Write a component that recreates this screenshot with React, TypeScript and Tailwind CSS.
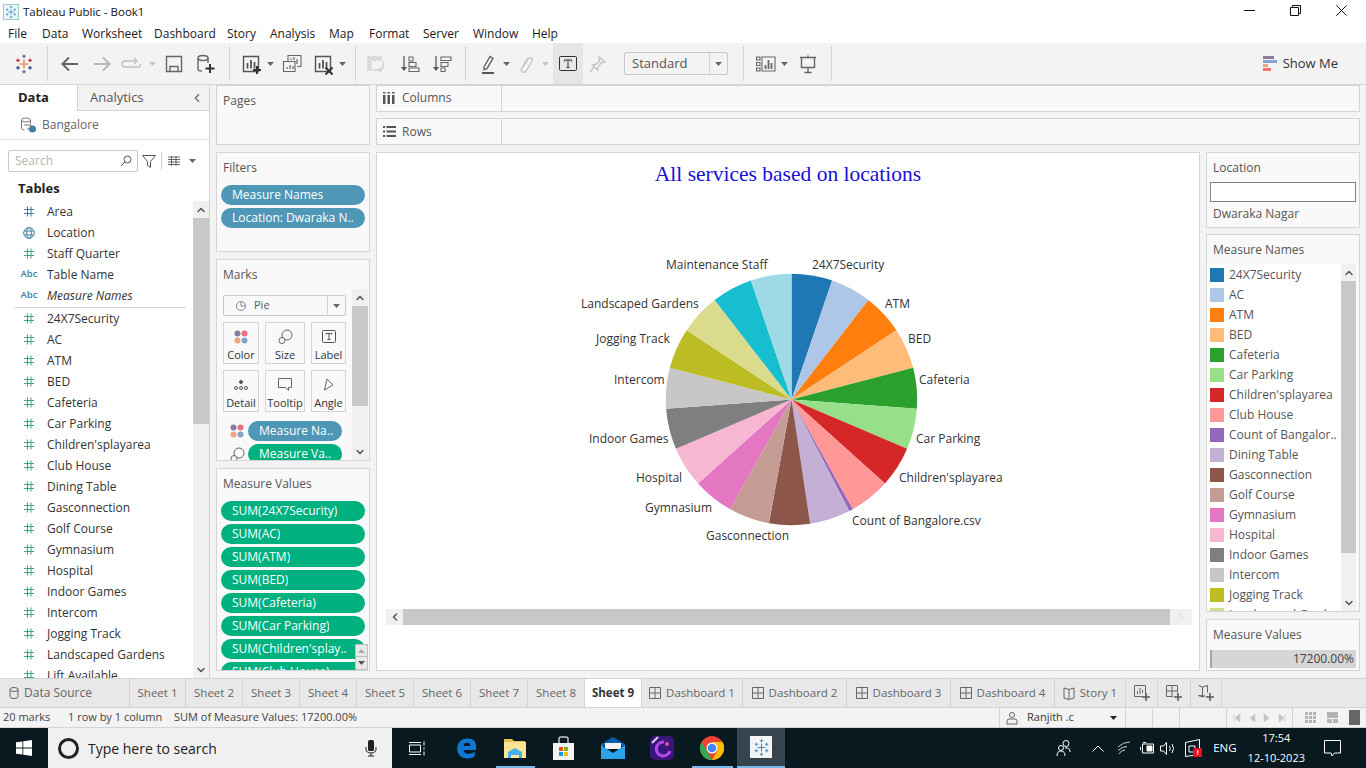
import type { ReactNode } from "react";
import { ChevronDown, ChevronLeft, ChevronRight, ChevronUp } from "lucide-react";

const FONT = "font-['Open_Sans','Noto_Sans',sans-serif]";

const COLORS = [
  "#1f77b4", "#aec7e8", "#ff7f0e", "#ffbb78", "#2ca02c", "#98df8a", "#d62728", "#ff9896", "#9467bd", "#c5b0d5",
  "#8c564b", "#c49c94", "#e377c2", "#f7b6d2", "#7f7f7f", "#c7c7c7", "#bcbd22", "#dbdb8d", "#17becf", "#9edae5",
];

const FIELDS_TOP = [
  { name: "Area", kind: "hash", color: "#3f7f9f" },
  { name: "Location", kind: "globe", color: "#3f7f9f" },
  { name: "Staff Quarter", kind: "hash", color: "#3fa682" },
  { name: "Table Name", kind: "abc", color: "#3f7f9f" },
  { name: "Measure Names", kind: "abc", color: "#3f7f9f", italic: true },
];

const MEASURES = [
  "24X7Security", "AC", "ATM", "BED", "Cafeteria", "Car Parking", "Children'splayarea", "Club House", "Dining Table",
  "Gasconnection", "Golf Course", "Gymnasium", "Hospital", "Indoor Games", "Intercom", "Jogging Track",
  "Landscaped Gardens", "Lift Available",
];

const LEGEND = [
  "24X7Security", "AC", "ATM", "BED", "Cafeteria", "Car Parking", "Children'splayarea", "Club House",
  "Count of Bangalor..", "Dining Table", "Gasconnection", "Golf Course", "Gymnasium", "Hospital", "Indoor Games",
  "Intercom", "Jogging Track", "Landscaped Gardens",
];

const VALUE_PILLS = [
  "SUM(24X7Security)", "SUM(AC)", "SUM(ATM)", "SUM(BED)", "SUM(Cafeteria)", "SUM(Car Parking)",
  "SUM(Children'splay..", "SUM(Club House)",
];

const SHEETS = ["Sheet 2", "Sheet 3", "Sheet 4", "Sheet 5", "Sheet 6", "Sheet 7", "Sheet 8"];

// labels sit on the chart canvas, x/y relative to the viz pane
const PIE_LABELS = [
  { text: "24X7Security", x: 435, y: 104 },
  { text: "ATM", x: 508, y: 143 },
  { text: "BED", x: 531, y: 178 },
  { text: "Cafeteria", x: 542, y: 219 },
  { text: "Car Parking", x: 539, y: 278 },
  { text: "Children'splayarea", x: 522, y: 317 },
  { text: "Count of Bangalore.csv", x: 475, y: 360 },
  { text: "Gasconnection", x: 329, y: 375 },
  { text: "Gymnasium", x: 268, y: 347 },
  { text: "Hospital", x: 259, y: 317 },
  { text: "Indoor Games", x: 212, y: 278 },
  { text: "Intercom", x: 237, y: 219 },
  { text: "Jogging Track", x: 219, y: 178 },
  { text: "Landscaped Gardens", x: 204, y: 143 },
  { text: "Maintenance Staff", x: 289, y: 104 },
];

function piePaths() {
  const cx = 414.5;
  const cy = 246.5;
  const r = 125.7;
  const small = 1.8;
  const step = (360 - small) / 19;
  let a = 0;
  return COLORS.map((fill, i) => {
    const sweep = i === 8 ? small : step;
    const a0 = ((a - 90) * Math.PI) / 180;
    const a1 = ((a + sweep - 90) * Math.PI) / 180;
    a += sweep;
    const d = `M${cx} ${cy}L${cx + r * Math.cos(a0)} ${cy + r * Math.sin(a0)}A${r} ${r} 0 0 1 ${cx + r * Math.cos(a1)} ${cy + r * Math.sin(a1)}Z`;
    return <path key={fill} d={d} fill={fill} />;
  });
}

const Ico = ({ children, w = 24, h = 24, color = "#666" }: { children: ReactNode; w?: number; h?: number; color?: string }) => (
  <svg width={w} height={h} viewBox={`0 0 ${w} ${h}`} fill="none" stroke={color} strokeWidth="1.4">
    {children}
  </svg>
);

const Tool = ({ className, children }: { className: string; children?: ReactNode }) => (
  <div className={`flex h-full shrink-0 items-center justify-center ${className}`}>{children}</div>
);

const Sep = ({ className = "" }: { className?: string }) => <div className={`h-[35px] w-px shrink-0 bg-[#d4d4d4] ${className}`} />;

const Caret = ({ color = "#666" }: { color?: string }) => (
  <svg width="7" height="4" viewBox="0 0 7 4">
    <path d="M0 0h7L3.500 4z" fill={color} />
  </svg>
);

const BarsBox = ({ color = "#555" }: { color?: string }) => (
  <>
    <path d="M5.500 4.500h15v15h-15z" stroke={color} />
    <path d="M9.500 11v5.500M13 8v8.500M16.500 10v6.500" stroke={color} strokeWidth="1.800" />
  </>
);

const TableauLogo = ({ size = 22, mono = false }: { size?: number; mono?: boolean }) => {
  const c = mono ? ["#3b8fc0", "#3b8fc0", "#3b8fc0", "#3b8fc0"] : ["#e8762d", "#5b6591", "#c72035", "#1f457e"];
  return (
    <svg width={size} height={size} viewBox="0 0 22 22" fill="none" strokeWidth="1.200">
      <path d="M11 6.500v9M6.500 11h9" stroke={c[0]} />
      <path d="M11 1.500v3.500M9.200 3.200h3.600M11 17v3.500M9.200 18.800h3.600" stroke={c[1]} />
      <path d="M5 5.500v3.600M3.200 7.300h3.600M17 5.500v3.600M15.200 7.300h3.600" stroke={c[2]} />
      <path d="M5 13v3.600M3.200 14.800h3.600M17 13v3.600M15.200 14.800h3.600" stroke={c[3]} />
    </svg>
  );
};

const TitleBar = () => (
  <div className="flex h-[24px] shrink-0 items-center bg-white pl-[3px]">
    <div className="flex h-[16px] w-[16px] items-center justify-center border border-[#9cc] bg-[#eef5f8]">
      <TableauLogo size={14} mono />
    </div>
    <span className="ml-[4px] text-[11.500px] text-[#111]">Tableau Public - Book1</span>
    <div className="ml-auto flex h-full items-center pb-[4px] pr-[2px] text-black">
      <div className="flex w-[46px] justify-center">
        <svg width="11" height="11" viewBox="0 0 11 11" stroke="#111"><path d="M0 5.500h11" /></svg>
      </div>
      <div className="flex w-[46px] justify-center">
        <svg width="11" height="11" viewBox="0 0 11 11" fill="none" stroke="#111"><path d="M.5 2.500h8v8h-8zM2.500 2.500v-2h8v8h-2" /></svg>
      </div>
      <div className="flex w-[46px] justify-center">
        <svg width="11" height="11" viewBox="0 0 11 11" stroke="#111"><path d="M.5.500l10 10M10.500.500l-10 10" /></svg>
      </div>
    </div>
  </div>
);

const MENU = [
  { t: "File", c: "w-[34px] pl-[8px]" },
  { t: "Data", c: "w-[48px] pl-[8px]" },
  { t: "Worksheet", c: "w-[72px]" },
  { t: "Dashboard", c: "w-[73px]" },
  { t: "Story", c: "w-[43px]" },
  { t: "Analysis", c: "w-[59px]" },
  { t: "Map", c: "w-[40px]" },
  { t: "Format", c: "w-[54px]" },
  { t: "Server", c: "w-[50px]" },
  { t: "Window", c: "w-[59px]" },
  { t: "Help", c: "w-[40px]" },
];

const MenuBar = () => (
  <div className="flex h-[19px] shrink-0 items-center bg-white text-[12px] text-[#1a1a1a]">
    {MENU.map((m) => (
      <span key={m.t} className={`shrink-0 ${m.c}`}>{m.t}</span>
    ))}
  </div>
);

const Toolbar = () => (
  <div className="flex h-[42px] shrink-0 items-center border-b border-[#d4d4d4] bg-[#f3f3f3]">
    <Tool className="w-[47px]"><TableauLogo /></Tool>
    <Sep />
    <Tool className="ml-[8px] w-[28px]">
      <Ico><path d="M20 12H5M11 5.500L4.500 12l6.500 6.500" strokeWidth="2" /></Ico>
    </Tool>
    <Tool className="ml-[4px] w-[28px]">
      <Ico color="#b5b5b5"><path d="M4 12h15M13 5.500l6.500 6.500-6.500 6.500" strokeWidth="2" /></Ico>
    </Tool>
    <Tool className="w-[30px]">
      <Ico color="#c4c4c4"><path d="M18 9H6q-3 0-3 3t3 3h13q2.500 0 2.500-3M15 6l3 3-3 3" /></Ico>
    </Tool>
    <Tool className="w-[12px]"><Caret color="#c4c4c4" /></Tool>
    <Tool className="ml-[2px] w-[28px]">
      <Ico><path d="M4.500 4.500h15v15h-15zM8 19.500v-5h8v5" /></Ico>
    </Tool>
    <Tool className="ml-[3px] w-[28px]">
      <Ico>
        <ellipse cx="10" cy="6" rx="5" ry="2.500" />
        <path d="M5 6v11q0 2 4 2M15 6v5" />
        <path d="M17 12v9M12.500 16.500h9" stroke="#333" strokeWidth="2" />
      </Ico>
    </Tool>
    <Sep className="ml-[10px]" />
    <Tool className="ml-[6px] w-[28px]">
      <Ico>
        <BarsBox />
        <path d="M19 14v8M15 18h8" stroke="#333" strokeWidth="2" />
      </Ico>
    </Tool>
    <Tool className="w-[12px]"><Caret /></Tool>
    <Tool className="w-[32px]">
      <Ico>
        <path d="M8 9V3.500h13v11h-4M3.500 9.500H15v10H3.500z" strokeWidth="1.100" />
        <path d="M11 8V6.500M14 8V5M17 12V7M7 17v-2M10 17v-4M13 17v-3" strokeWidth="1.200" />
      </Ico>
    </Tool>
    <Tool className="w-[28px]">
      <Ico>
        <BarsBox />
        <path d="M15.500 15.500l7 7M22.500 15.500l-7 7" stroke="#333" strokeWidth="2" />
      </Ico>
    </Tool>
    <Tool className="w-[12px]"><Caret /></Tool>
    <Sep className="ml-[7px]" />
    <Tool className="ml-[6px] w-[28px]">
      <Ico color="#c4c4c4">
        <path d="M4 5h3v3H4zM9 5h3v3H9zM14 5h3v3h-3zM4 10h3v3H4zM4 15h3v3H4zM9 18h6M19 9v6q0 2-2 3M17 16l-2 2 2 2" strokeWidth="1.100" />
      </Ico>
    </Tool>
    <Tool className="ml-[5px] w-[28px]">
      <Ico>
        <path d="M7 4v14" />
        <path d="M4 15h6l-3 4z" fill="#555" stroke="none" />
        <path d="M12 5h4v4h-4zM12 10.500h7v4h-7zM12 16h10v3.500H12z" strokeWidth="1.100" />
      </Ico>
    </Tool>
    <Tool className="ml-[4px] w-[28px]">
      <Ico>
        <path d="M7 4v14" />
        <path d="M4 15h6l-3 4z" fill="#555" stroke="none" />
        <path d="M12 5h10v3.500H12zM12 10.500h7v4h-7zM12 16h4v3.500h-4z" strokeWidth="1.100" />
      </Ico>
    </Tool>
    <Sep className="ml-[10px]" />
    <Tool className="ml-[9px] w-[26px]">
      <Ico>
        <path d="M8 15L14 4.500l3 1.700-6 10.500-3 1z" />
        <path d="M6 21h12" stroke="#555" strokeWidth="2" />
      </Ico>
    </Tool>
    <Tool className="w-[10px]"><Caret /></Tool>
    <Tool className="w-[28px]">
      <Ico color="#c4c4c4"><path d="M15 7l-6 9q-2 3 .5 4t4-1.500l5-8.500q1.500-3-.5-4t-4 1.500l-6 10" /></Ico>
    </Tool>
    <Tool className="w-[12px]"><Caret color="#c4c4c4" /></Tool>
    <Tool className="ml-[2px] h-[30px] w-[30px] bg-[#e6e6e6]">
      <svg width="18" height="16" viewBox="0 0 18 16" fill="none" stroke="#333">
        <rect x=".5" y=".5" width="17" height="14" rx="1" />
        <path d="M5.500 5.500V4h7v1.500M9 4v7.500M7.500 11.500h3" />
      </svg>
    </Tool>
    <Tool className="w-[28px]">
      <Ico color="#c4c4c4"><path d="M14 5l6 5-3.500.5-3.500 4.500-.5 3-5-5 3-.5 4-3.500zM9 15l-4 5" /></Ico>
    </Tool>
    <div className="ml-[13px] flex h-[23px] w-[104px] shrink-0 items-center rounded-[2px] border border-[#c8c8c8] text-[13px] text-[#555]">
      <span className="flex-1 pl-[7px]">Standard</span>
      <div className="flex h-full w-[18px] items-center justify-center border-l border-[#d4d4d4]"><Caret /></div>
    </div>
    <Sep className="ml-[15px]" />
    <Tool className="ml-[8px] w-[28px]">
      <Ico>
        <path d="M2.500 5h3.500v3H2.500zM2.500 10.500h3.500v3H2.500zM2.500 16h3.500v3H2.500zM8 5h13v14H8z" strokeWidth="1.100" />
        <path d="M11.500 17v-4M14.500 17V8M17.500 17v-6" strokeWidth="1.800" />
      </Ico>
    </Tool>
    <Tool className="w-[8px]"><Caret /></Tool>
    <Tool className="ml-[6px] w-[28px]">
      <Ico><path d="M4 5.500h16M5.500 5.500v10h13v-10M12 15.500V20M8.500 20.500h7M12 3.500v2" /></Ico>
    </Tool>
    <Sep className="ml-[9px]" />
    <div className="ml-auto flex items-center pr-[28px]">
      <svg width="15" height="16" viewBox="0 0 15 16">
        <rect width="11" height="3" fill="#8a7aa0" />
        <rect y="4" width="14" height="3" fill="#7fa5d0" />
        <rect y="8" width="5" height="3" fill="#f2a57f" />
        <rect y="12" width="8" height="3" fill="#f0707a" />
      </svg>
      <span className="ml-[5px] text-[13px] text-[#333]">Show Me</span>
    </div>
  </div>
);

const FieldIcon = ({ kind, color }: { kind: string; color: string }) => {
  if (kind === "abc") return <span className="w-full text-center text-[9.500px] font-semibold" style={{ color }}>Abc</span>;
  if (kind === "globe")
    return (
      <svg width="12" height="12" viewBox="0 0 12 12" fill="none" stroke={color}>
        <circle cx="6" cy="6" r="5.300" />
        <ellipse cx="6" cy="6" rx="2.300" ry="5.300" />
        <path d="M1 4h10M1 8h10" />
      </svg>
    );
  return (
    <svg width="10" height="11" viewBox="0 0 10 11" fill="none" stroke={color}>
      <path d="M3.500.500v10M7 .500v10M0 3.500h10M0 7.500h10" />
    </svg>
  );
};

const FieldRow = ({ name, kind, color, italic }: { name: string; kind: string; color: string; italic?: boolean }) => (
  <div className="flex h-[21px] shrink-0 items-center">
    <div className="flex w-[47px] shrink-0 items-center justify-center pl-[15px] pr-[4px]"><FieldIcon kind={kind} color={color} /></div>
    <span className={`text-[12px] text-[#333] ${italic ? "italic" : ""}`}>{name}</span>
  </div>
);

const VScroll = ({ className = "w-[16px]", thumb }: { className?: string; thumb: string }) => (
  <div className={`flex shrink-0 flex-col items-center bg-[#f0f0f0] ${className}`}>
    <div className="flex h-[17px] shrink-0 items-center justify-center"><ChevronUp size={12} strokeWidth={3} color="#555" /></div>
    <div className={`w-full bg-[#c8c8c8] ${thumb}`} />
    <div className="mt-auto flex h-[17px] shrink-0 items-center justify-center"><ChevronDown size={12} strokeWidth={3} color="#555" /></div>
  </div>
);

const DataPane = () => (
  <div className="flex w-[210px] shrink-0 flex-col border-r border-[#d4d4d4] bg-white">
    <div className="flex h-[26px] shrink-0 items-center">
      <div className="flex h-full w-[77px] items-center justify-center pr-[10px] text-[13px] font-bold text-[#222]">Data</div>
      <div className="flex h-full flex-1 items-center justify-between border-b border-l border-[#d4d4d4] bg-[#f3f3f3] pl-[12px] pr-[5px] text-[13px] text-[#555]">
        <span>Analytics</span>
        <ChevronLeft size={14} color="#666" />
      </div>
    </div>
    <div className="flex h-[29px] shrink-0 items-center border-b border-[#e2e2e2] pl-[20px]">
      <svg width="16" height="16" viewBox="0 0 16 16" fill="none" stroke="#777">
        <ellipse cx="6" cy="3" rx="4.500" ry="2" />
        <path d="M1.500 3v8q0 1.500 3 2M10.500 3v4M4 8h7v4H7" />
        <circle cx="12.500" cy="12" r="3.500" fill="#3f7f9f" stroke="none" />
      </svg>
      <span className="ml-[6px] text-[12px] text-[#666]">Bangalore</span>
    </div>
    <div className="mt-[10px] flex h-[22px] shrink-0 items-center pl-[8px]">
      <div className="flex h-[22px] w-[130px] items-center justify-between rounded-[2px] border border-[#c8c8c8] pl-[6px] pr-[5px] text-[12px] text-[#b4b4b4]">
        <span>Search</span>
        <svg width="12" height="12" viewBox="0 0 12 12" fill="none" stroke="#555"><circle cx="7.500" cy="4.500" r="3.500" /><path d="M5 7l-4 4" /></svg>
      </div>
      <svg className="ml-[4px]" width="14" height="14" viewBox="0 0 14 14" fill="none" stroke="#555"><path d="M.5 1.500h13L8.500 7.500v6l-3-2v-4z" /></svg>
      <div className="ml-[5px] h-[18px] w-px bg-[#d4d4d4]" />
      <svg className="ml-[6px]" width="12" height="10" viewBox="0 0 12 10" fill="none" stroke="#666"><path d="M0 1h12M0 3.500h12M0 6h12M0 8.500h12M3.500 0v10M8 0v10" /></svg>
      <div className="ml-[9px]"><Caret /></div>
    </div>
    <div className="mt-[6px] flex h-[23px] shrink-0 items-center pb-[2px] pl-[18px] text-[13px] font-bold text-[#222]">Tables</div>
    <div className="flex min-h-0 flex-1 overflow-hidden">
      <div className="flex-1 overflow-hidden">
        {FIELDS_TOP.map((f) => <FieldRow key={f.name} {...f} />)}
        <div className="ml-[15px] mt-[1px] h-px w-[171px] bg-[#d4d4d4]" />
        {MEASURES.map((m) => <FieldRow key={m} name={m} kind="hash" color="#3fa682" />)}
      </div>
      <VScroll className="h-full w-[16px]" thumb="h-[206px]" />
    </div>
  </div>
);

const Card = ({ title, className, children }: { title: string; className: string; children?: ReactNode }) => (
  <div className={`flex shrink-0 flex-col overflow-hidden border border-[#d4d4d4] bg-[#f9f9f9] ${className}`}>
    <div className="shrink-0 pl-[6px] pt-[6px] text-[12px] leading-[17px] text-[#555]">{title}</div>
    {children}
  </div>
);

const Pill = ({ text, color, className = "w-[144px]" }: { text: string; color: string; className?: string }) => (
  <div className={`flex h-[20px] shrink-0 items-center rounded-full pl-[11px] text-[12px] text-white ${className}`} style={{ backgroundColor: color }}>
    <span className="truncate">{text}</span>
  </div>
);

const MarkCard = ({ label, children }: { label: string; children: ReactNode }) => (
  <div className="flex h-[42px] flex-col items-center border border-[#d4d4d4] pt-[3px]">
    <div className="flex h-[21px] items-center">{children}</div>
    <span className="text-[11px] leading-[15px] text-[#333]">{label}</span>
  </div>
);

const Dots = () => (
  <svg width="14" height="14" viewBox="0 0 14 14">
    <circle cx="3.500" cy="3.500" r="3" fill="#8a7aa0" />
    <circle cx="10.500" cy="3.500" r="3" fill="#e8707a" />
    <circle cx="3.500" cy="10.500" r="3" fill="#f0a57f" />
    <circle cx="10.500" cy="10.500" r="3" fill="#7fa5d0" />
  </svg>
);

const SizeIcon = () => (
  <svg width="15" height="15" viewBox="0 0 15 15" fill="none" stroke="#666">
    <circle cx="9" cy="6" r="5" />
    <circle cx="4" cy="11.500" r="3" fill="#f9f9f9" />
  </svg>
);

const MarksCard = () => (
  <Card title="Marks" className="h-[202px]">
    <div className="mt-[6px] flex min-h-0 flex-1">
      <div className="min-w-0 flex-1 overflow-hidden pl-[6px] pt-[6px]">
        <div className="flex h-[21px] w-[123px] items-center rounded-[2px] border border-[#c8c8c8] text-[11px] text-[#555]">
          <svg className="ml-[12px]" width="10" height="10" viewBox="0 0 10 10" fill="none" stroke="#888"><circle cx="5" cy="5" r="4.500" /><path d="M5 5V1M5 5h4" /></svg>
          <span className="ml-[8px] flex-1">Pie</span>
          <div className="flex h-full w-[18px] items-center justify-center border-l border-[#d4d4d4]"><Caret /></div>
        </div>
        <div className="mt-[6px] grid w-[123px] grid-cols-[36px_40px_35px] gap-x-[6px] gap-y-[6px]">
          <MarkCard label="Color"><Dots /></MarkCard>
          <MarkCard label="Size"><SizeIcon /></MarkCard>
          <MarkCard label="Label">
            <svg width="14" height="14" viewBox="0 0 14 14" fill="none" stroke="#555"><rect x=".5" y=".5" width="13" height="12" rx="1" /><path d="M4 4.500V3.500h6v1M7 3.500v6M5.500 9.500h3" /></svg>
          </MarkCard>
          <MarkCard label="Detail">
            <svg width="14" height="12" viewBox="0 0 14 12" fill="none" stroke="#555"><circle cx="7" cy="3" r="1.500" fill="#555" /><circle cx="2" cy="9" r="1.500" /><circle cx="7" cy="9" r="1.500" /><circle cx="12" cy="9" r="1.500" /></svg>
          </MarkCard>
          <MarkCard label="Tooltip">
            <svg width="15" height="14" viewBox="0 0 15 14" fill="none" stroke="#666"><path d="M.5.500h13v9h-3v3l-3-3h-7z" /></svg>
          </MarkCard>
          <MarkCard label="Angle">
            <svg width="11" height="14" viewBox="0 0 11 14" fill="none" stroke="#666"><path d="M4 1l6 6-8.500 5z" /></svg>
          </MarkCard>
        </div>
        <div className="mt-[9px] flex items-center">
          <div className="ml-[7px] w-[18px]"><Dots /></div>
          <Pill text="Measure Na.." color="#4e97b6" className="w-[94px]" />
        </div>
        <div className="mt-[3px] flex items-center">
          <div className="ml-[7px] w-[18px]"><SizeIcon /></div>
          <Pill text="Measure Va.." color="#00b180" className="w-[94px]" />
        </div>
      </div>
      <VScroll thumb="h-[100px]" className="mr-[1px] w-[16px]" />
    </div>
  </Card>
);

const MiddleColumn = () => (
  <div className="flex w-[154px] shrink-0 flex-col">
    <Card title="Pages" className="h-[60px]" />
    <Card title="Filters" className="mt-[7px] h-[100px]">
      <div className="mt-[9px] flex flex-col gap-[3px] pl-[4px]">
        <Pill text="Measure Names" color="#4e97b6" />
        <Pill text="Location: Dwaraka N.." color="#4e97b6" />
      </div>
    </Card>
    <div className="mt-[7px]"><MarksCard /></div>
    <Card title="Measure Values" className="relative mt-[7px] h-[203px]">
      <div className="mt-[9px] flex flex-col gap-[3px] overflow-hidden pl-[4px]">
        {VALUE_PILLS.map((p) => <Pill key={p} text={p} color="#00b180" />)}
      </div>
      <div className="absolute bottom-0 right-[1px] flex w-[13px] flex-col border border-[#c0c0c0] bg-[#e8e8e8]">
        <div className="flex h-[12px] items-center justify-center border-b border-[#c0c0c0]">
          <div className="rotate-180"><Caret color="#aaa" /></div>
        </div>
        <div className="flex h-[12px] items-center justify-center"><Caret color="#555" /></div>
      </div>
    </Card>
  </div>
);

const Shelf = ({ label, icon, className = "" }: { label: string; icon: ReactNode; className?: string }) => (
  <div className="flex h-[27px] shrink-0 border border-[#d4d4d4] bg-[#f9f9f9]">
    <div className={`flex w-[125px] shrink-0 items-center border-r border-[#d4d4d4] pl-[6px] text-[12px] text-[#555] ${className}`}>
      <div className="flex w-[19px]">{icon}</div>
      {label}
    </div>
  </div>
);

const PieCanvas = () => (
  <div className="relative h-[449px] w-full shrink-0">
    <svg className="absolute left-0 top-0" width="822" height="449">{piePaths()}</svg>
    {PIE_LABELS.map((l) => (
      <span
        key={l.text}
        className="absolute whitespace-nowrap text-[12px] leading-[16px] text-[#333]"
        style={{ left: l.x, top: l.y }}
      >
        {l.text}
      </span>
    ))}
  </div>
);

const VizPane = () => (
  <div className="flex h-[519px] min-w-0 flex-1 flex-col overflow-hidden border border-[#d4d4d4] bg-white">
    <div className="flex h-[40px] shrink-0 items-center justify-center pt-[3px] font-['Liberation_Serif',serif] text-[21.500px] text-[#1a0fd6]">
      All services based on locations
    </div>
    <div className="h-[416px] shrink-0 overflow-hidden">
      <div className="-mt-[40px]"><PieCanvas /></div>
    </div>
    <div className="ml-[9px] flex h-[16px] w-[806px] shrink-0 items-center bg-[#f0f0f0]">
      <div className="flex w-[17px] justify-center"><ChevronLeft size={12} strokeWidth={3} color="#555" /></div>
      <div className="h-full w-[767px] bg-[#c8c8c8]" />
      <div className="flex flex-1 justify-center"><ChevronRight size={12} strokeWidth={2} color="#ddd" /></div>
    </div>
  </div>
);

const RightColumn = () => (
  <div className="flex w-[154px] shrink-0 flex-col">
    <Card title="Location" className="h-[76px]">
      <div className="mx-[3px] mt-[6px] h-[20px] shrink-0 border border-[#80808a] bg-white" />
      <div className="pl-[6px] pt-[3px] text-[12px] leading-[17px] text-[#555]">Dwaraka Nagar</div>
    </Card>
    <Card title="Measure Names" className="mt-[6px] h-[378px]">
      <div className="mr-[3px] mt-[6px] flex min-h-0 flex-1 bg-white">
        <div className="min-w-0 flex-1 overflow-hidden pl-[3px] pt-[1px]">
          {LEGEND.map((l, i) => (
            <div key={l} className="flex h-[20px] items-center">
              <div className="h-[14px] w-[14px] shrink-0" style={{ backgroundColor: COLORS[i] }} />
              <span className="ml-[5px] whitespace-nowrap text-[12px] text-[#555]">{l}</span>
            </div>
          ))}
        </div>
        <VScroll thumb="h-[272px]" className="w-[15px]" />
      </div>
    </Card>
    <Card title="Measure Values" className="mt-[7px] h-[52px]">
      <div className="mx-[3px] mt-[7px] flex h-[18px] shrink-0 items-center justify-end border-l-2 border-[#a8a8a8] bg-[#d6d6d6] pr-[2px] text-[12px] text-[#444]">17200.00%</div>
    </Card>
  </div>
);

const Workspace = () => (
  <div className="flex h-[593px] shrink-0 bg-[#f3f3f3]">
    <DataPane />
    <div className="ml-[6px]"><MiddleColumn /></div>
    <div className="ml-[6px] mr-[6px] flex min-w-0 flex-1 flex-col">
      <Shelf
        label="Columns"
        className="pb-[2px]"
        icon={<svg width="12" height="12" viewBox="0 0 12 12" fill="#555"><rect y="3" width="2.500" height="9" /><rect x="4.500" y="3" width="2.500" height="9" /><rect x="9" y="3" width="2.500" height="9" /><rect y="0" width="2.500" height="1.500" /><rect x="4.500" y="0" width="2.500" height="1.500" /><rect x="9" y="0" width="2.500" height="1.500" /></svg>}
      />
      <div className="mt-[6px]">
        <Shelf
          label="Rows"
          icon={<svg width="13" height="11" viewBox="0 0 13 11" fill="#555"><rect width="2" height="2" /><rect x="3.500" width="9.500" height="2" /><rect y="4.500" width="2" height="2" /><rect x="3.500" y="4.500" width="9.500" height="2" /><rect y="9" width="2" height="2" /><rect x="3.500" y="9" width="9.500" height="2" /></svg>}
        />
      </div>
      <div className="mt-[7px] flex gap-[6px]">
        <VizPane />
        <RightColumn />
      </div>
    </div>
  </div>
);

const Tab = ({ label, className, icon, active }: { label?: string; className: string; icon?: ReactNode; active?: boolean }) => (
  <div className={`flex h-full shrink-0 items-center justify-center border-r border-[#d4d4d4] ${active ? "bg-white font-bold text-[#333]" : "text-[#666]"} ${className}`}>
    {icon}
    {label && <span className={icon ? "ml-[5px]" : ""}>{label}</span>}
  </div>
);

const DashIcon = () => (
  <svg width="12" height="12" viewBox="0 0 12 12" fill="none" stroke="#666"><path d="M.5.500h11v11H.5zM6 .500v11M.5 6h11" /></svg>
);

const StoryIcon = () => (
  <svg width="12" height="13" viewBox="0 0 12 13" fill="none" stroke="#666"><path d="M1 1l5 1.500L11 1v10l-5 1.500L1 11zM6 2.500v10" /></svg>
);

const Plus = ({ children }: { children: ReactNode }) => (
  <svg width="18" height="18" viewBox="0 0 18 18" fill="none" stroke="#666">
    {children}
    <path d="M13 9v8M9 13h8" stroke="#555" strokeWidth="1.500" />
  </svg>
);

const TabBar = () => (
  <div className="flex h-[30px] shrink-0 border-y border-[#d4d4d4] bg-[#e8e8e8]">
    <Tab
      className="w-[130px] justify-start pl-[9px] text-[12px]"
      icon={<svg width="10" height="12" viewBox="0 0 10 12" fill="none" stroke="#666"><ellipse cx="5" cy="2.500" rx="4" ry="2" /><path d="M1 2.500v7q0 2 4 2t4-2v-7" /></svg>}
      label="Data Source"
    />
    <Tab label="Sheet 1" className="w-[56px] text-[11.500px]" />
    {SHEETS.map((s) => <Tab key={s} label={s} className="w-[57px] text-[11.500px]" />)}
    <Tab label="Sheet 9" className="w-[57px] text-[11.500px]" active />
    <Tab label="Dashboard 1" icon={<DashIcon />} className="w-[101px] text-[11.500px]" />
    <Tab label="Dashboard 2" icon={<DashIcon />} className="w-[104px] text-[11.500px]" />
    <Tab label="Dashboard 3" icon={<DashIcon />} className="w-[104px] text-[11.500px]" />
    <Tab label="Dashboard 4" icon={<DashIcon />} className="w-[104px] text-[11.500px]" />
    <Tab label="Story 1" icon={<StoryIcon />} className="w-[71px] text-[11.500px]" />
    <Tab className="w-[32px]" icon={<Plus><path d="M1.500 1.500h11v8M9.500 12.500h-8v-11M4.500 10V7M7 10V4M9.500 9V6" /></Plus>} />
    <Tab className="w-[33px]" icon={<Plus><path d="M1.500 1.500h11v7M8 12.500H1.500v-11M7 1.500v11M1.500 7h11" /></Plus>} />
    <Tab className="w-[31px]" icon={<Plus><path d="M1.500 1.500l4 1.500 5-1.500v7M8 12l-2.500 1-4-1.500zM5.500 3v10" /></Plus>} />
  </div>
);

const StatusBar = () => (
  <div className="flex h-[20px] shrink-0 items-center border-b border-[#d4d4d4] bg-[#f3f3f3] text-[11px] text-[#444]">
    <span className="w-[68px] pl-[3px]">20 marks</span>
    <span className="w-[106px]">1 row by 1 column</span>
    <span className="w-[825px]">SUM of Measure Values: 17200.00%</span>
    <div className="flex h-full w-[127px] items-center border-x border-[#d4d4d4] pl-[6px]">
      <svg width="12" height="14" viewBox="0 0 12 14" fill="none" stroke="#666"><circle cx="6" cy="4" r="2.500" /><path d="M1 13V10q0-2 2-2h6q2 0 2 2v3z" /></svg>
      <span className="ml-[9px] flex-1 text-[#333]">Ranjith .c</span>
      <div className="mr-[8px]"><Caret color="#222" /></div>
    </div>
    <div className="h-full w-[27px] border-r border-[#d4d4d4]" />
    <div className="h-full w-[27px] border-r border-[#d4d4d4]" />
    <div className="h-full w-[47px] border-r border-[#d4d4d4]" />
    <div className="flex h-full w-[66px] items-center justify-around border-r border-[#d4d4d4] px-[3px]">
      {["M7 1L2 5l5 4zM1 1v8", "M7 1L2 5l5 4z", "M2 1l5 4-5 4z", "M2 1l5 4-5 4zM8 1v8"].map((d) => (
        <svg key={d} width="9" height="10" viewBox="0 0 9 10" fill="#c4c4c4" stroke="#c4c4c4" strokeWidth=".6"><path d={d} /></svg>
      ))}
    </div>
    <div className="flex flex-1 items-center justify-around pl-[6px] pr-[1px]">
      <svg width="11" height="11" viewBox="0 0 11 11" fill="#b4b4b4"><path d="M0 0h3v3H0zM4 0h3v3H4zM8 0h3v3H8zM0 4h3v3H0zM4 4h3v3H4zM8 4h3v3H8zM0 8h3v3H0zM4 8h3v3H4zM8 8h3v3H8z" /></svg>
      <svg width="11" height="11" viewBox="0 0 11 11" fill="#b4b4b4"><path d="M0 0h11v6H0zM0 7h5v4H0zM6 7h5v4H6z" /></svg>
      <div className="h-[15px] w-[11px] bg-[#666]" />
    </div>
  </div>
);

const TaskSlot = ({ className, children, bar }: { className: string; children: ReactNode; bar?: boolean }) => (
  <div className={`relative flex h-full shrink-0 items-center justify-center ${className}`}>
    {children}
    {bar && <div className="absolute bottom-0 left-[5px] right-[4px] h-[2px] bg-[#76b9ed]" />}
  </div>
);

const Taskbar = () => (
  <div className="flex h-[40px] shrink-0 items-center bg-[#08191f] text-white">
    <TaskSlot className="w-[48px]">
      <svg width="16" height="16" viewBox="0 0 16 16" fill="#fff"><path d="M0 2.300L6.500 1.400v6.200H0zM7.300 1.300L16 0v7.600H7.300zM0 8.400h6.500v6.200L0 13.700zM7.300 8.400H16V16l-8.700-1.300z" /></svg>
    </TaskSlot>
    <div className="flex h-full w-[344px] shrink-0 items-center bg-[#f0f0f0] text-[#222]">
      <div className="ml-[10px] h-[21px] w-[21px] rounded-full border-[3px] border-[#222]" />
      <span className="ml-[9px] flex-1 text-[14px]">Type here to search</span>
      <svg className="mr-[15px]" width="12" height="17" viewBox="0 0 12 17" fill="#222"><rect x="3" width="6" height="11" rx="1.500" /><path d="M1 7v2q0 4 5 4t5-4V7M6 13v3M3 16h6" fill="none" stroke="#222" /></svg>
    </div>
    <TaskSlot className="w-[50px]">
      <svg width="17" height="15" viewBox="0 0 17 15" fill="none" stroke="#fff"><path d="M.5 4h11v7H.5zM0 1.500h12M0 13.500h12M15 .5v4M15 6.500v2M15 10.500v4" /></svg>
    </TaskSlot>
    <TaskSlot className="w-[49px]">
      <svg width="21" height="21" viewBox="0 0 22 22"><path d="M1 11q1-10 10.500-10.500T21 9v3.500H8q.5 4 5 4 4 0 6.500-2v5q-3 2-7 2Q2 21.500 1 11zM8 8.500h7q0-3.500-3.500-3.500T8 8.500z" fill="#0f78d4" /></svg>
    </TaskSlot>
    <TaskSlot className="w-[48px]" bar>
      <svg width="22" height="20" viewBox="0 0 22 20">
        <path d="M0 1h8l2 2h11v3H0z" fill="#e8c04a" />
        <path d="M0 4h22v16H0z" fill="#fbe596" />
        <path d="M4 20v-6l7-4 7 4v6h-3v-3H7v3z" fill="#46b0e8" />
      </svg>
    </TaskSlot>
    <TaskSlot className="w-[49px]">
      <svg width="23" height="24" viewBox="0 0 23 24">
        <path d="M1 7h21v17H1z" fill="#f3f3f3" />
        <path d="M7 7V3q0-2 2-2h5q2 0 2 2v4" fill="none" stroke="#c8c8c8" strokeWidth="1.500" />
        <path d="M7 11h4v4H7z" fill="#e8502a" />
        <path d="M12 11h4v4h-4z" fill="#7fba00" />
        <path d="M7 16h4v4H7z" fill="#00a4ef" />
        <path d="M12 16h4v4h-4z" fill="#ffb900" />
      </svg>
    </TaskSlot>
    <TaskSlot className="w-[49px]">
      <svg width="24" height="22" viewBox="0 0 24 22">
        <path d="M0 7L12 0l12 7v2H0z" fill="#0b5fa8" />
        <path d="M4 6h16v6H4z" fill="#f4f4f4" />
        <path d="M0 8l12 8 12-8v14H0z" fill="#29a3ea" />
      </svg>
    </TaskSlot>
    <TaskSlot className="w-[50px]">
      <svg width="24" height="24" viewBox="0 0 24 24"><rect width="24" height="24" rx="5" fill="#3a1678" /><path d="M14 6a7 7 0 1 0 6 9" fill="none" stroke="#b04ae8" strokeWidth="3" /><circle cx="17" cy="8" r="2" fill="#f04ab0" /><path d="M2 7l6-6" stroke="#e8c8f8" strokeWidth="2" /></svg>
    </TaskSlot>
    <TaskSlot className="w-[50px]" bar>
      <svg width="24" height="24" viewBox="0 0 24 24">
        <circle cx="12" cy="12" r="12" fill="#ea4335" />
        <path d="M12 24a12 12 0 0 1-10.400-18L7 15l5 9z" fill="#34a853" />
        <path d="M12 24l5.500-9.500L12 6h10.500A12 12 0 0 1 12 24z" fill="#fbbc05" />
        <circle cx="12" cy="12" r="5.500" fill="#fff" />
        <circle cx="12" cy="12" r="4.300" fill="#4285f4" />
      </svg>
    </TaskSlot>
    <div className="flex h-full w-[48px] shrink-0 items-center justify-center border-b-2 border-[#76b9ed] bg-[#36454d]">
      <div className="flex h-[22px] w-[22px] items-center justify-center bg-[#f4f4f4]"><TableauLogo size={19} mono /></div>
    </div>
    <div className="ml-auto flex h-full items-center">
      <svg className="mr-[21px]" width="15" height="18" viewBox="0 0 15 18" fill="none" stroke="#fff"><circle cx="10" cy="4.500" r="3" /><circle cx="5" cy="9" r="2.500" /><path d="M1 17q0-5 4-5t4 5M9 9q5-1 5 4" /></svg>
      <svg className="mr-[13px]" width="12" height="7" viewBox="0 0 12 7" fill="none" stroke="#fff"><path d="M.5 6.500L6 1l5.500 5.500" /></svg>
      <svg className="mr-[9px]" width="14" height="14" viewBox="0 0 14 14" fill="none" stroke="#ccc"><path d="M1 6q5-5 12-5M1 9.500q4-4 9-4M2 13q2-4 6-4" /></svg>
      <svg className="mr-[5px]" width="15" height="12" viewBox="0 0 15 12" fill="none" stroke="#fff"><path d="M2.500 2h11v9h-11zM.5 5v3M3 .5h3" /><path d="M7 4h5v5H7z" fill="#fff" /></svg>
      <svg className="mr-[9px]" width="16" height="15" viewBox="0 0 16 15" fill="none" stroke="#fff"><path d="M.5 5h3l3-3.500v12l-3-3.500h-3zM9.500 5q1.500 2.500 0 5M12 3q3 4.500 0 9" /></svg>
      <div className="relative mr-[13px] h-[18px] w-[15px]">
        <svg width="15" height="18" viewBox="0 0 15 18" fill="none" stroke="#fff"><path d="M.5 3.500l14-3v15l-14 2z" /><path d="M4 7h6v6H4z" /></svg>
        <div className="absolute bottom-0 right-[-2px] flex h-[9px] w-[9px] items-center justify-center rounded-[1px] bg-[#e81123] text-[7px] font-bold leading-none">!</div>
      </div>
      <span className="mr-[11px] text-[11.500px]">ENG</span>
      <div className="mr-[19px] flex flex-col items-center text-[11px] leading-[20px]">
        <span>17:54</span>
        <span>12-10-2023</span>
      </div>
      <svg className="mr-[25px]" width="17" height="17" viewBox="0 0 17 17" fill="none" stroke="#fff"><path d="M.5.500h16v12.500h-6l-2.500 3-1-3H.5z" /></svg>
    </div>
  </div>
);

export default function App() {
  return (
    <div className={`flex h-[768px] w-[1366px] flex-col overflow-hidden bg-white ${FONT}`}>
      <TitleBar />
      <MenuBar />
      <Toolbar />
      <Workspace />
      <TabBar />
      <StatusBar />
      <Taskbar />
    </div>
  );
}
